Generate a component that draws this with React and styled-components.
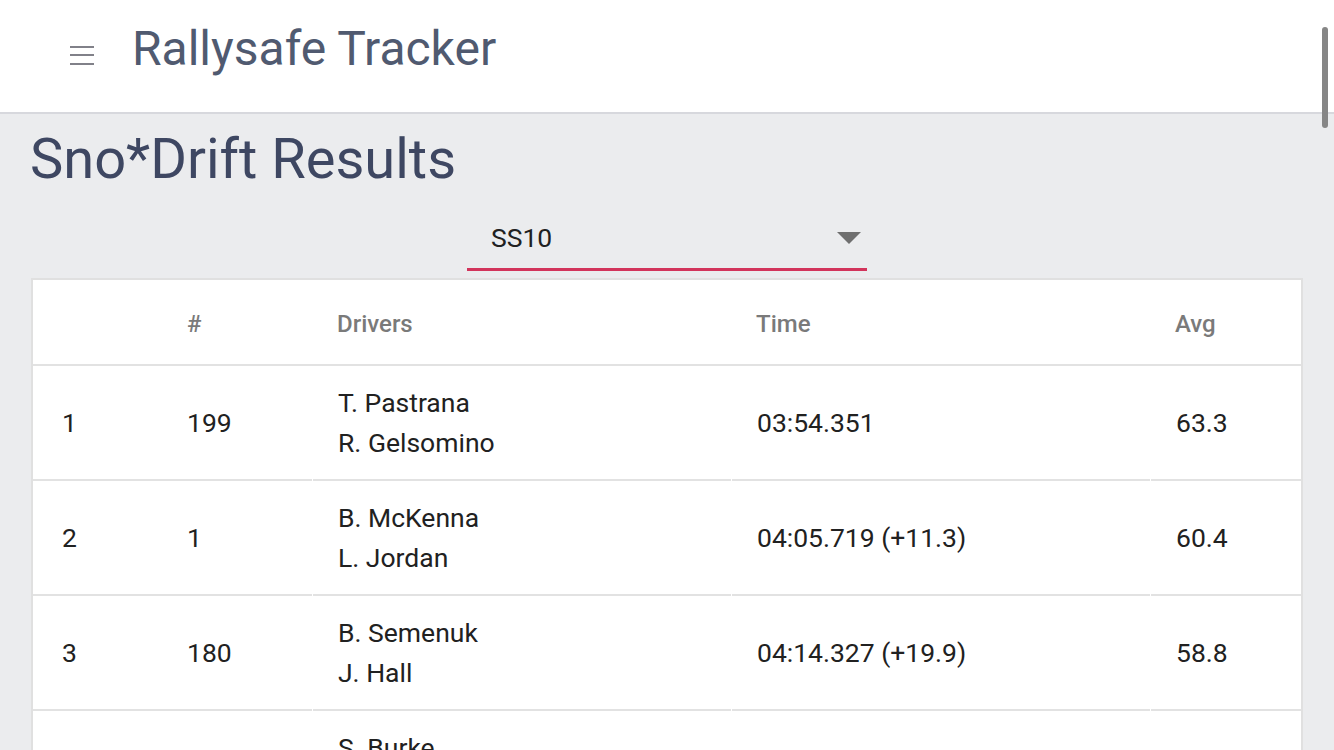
import React from "react";
import styled, { createGlobalStyle } from "styled-components";

const Global = createGlobalStyle`
  html { scrollbar-width: none; }
  html::-webkit-scrollbar { display: none; }
  body {
    margin: 0;
    background: #ebecee;
    font-family: Roboto, "Liberation Sans", sans-serif;
    color: #212121;
  }
  * { box-sizing: border-box; }
`;

const TopBar = styled.header`
  height: 114px;
  background: #ffffff;
  border-bottom: 2px solid #d7d8dd;
  display: flex;
  align-items: center;
  padding-left: 70px;
`;

const MenuButton = styled.div`
  width: 24px;
  height: 19px;
  display: flex;
  flex-direction: column;
  justify-content: space-between;
  margin-top: -2px;
  span {
    display: block;
    height: 2px;
    background: #818189;
  }
`;

const AppTitle = styled.h1`
  margin: 25px 0 0 38px;
  align-self: flex-start;
  font-size: 48px;
  line-height: 48px;
  font-weight: 400;
  color: #505a70;
`;

const Main = styled.main`
  padding: 17px 31px 0 31px;
`;

const PageTitle = styled.h2`
  margin: 0 0 0 -1px;
  font-size: 56px;
  line-height: 56px;
  font-weight: 400;
  color: #3e4762;
`;

const SelectRow = styled.div`
  display: flex;
  justify-content: center;
  margin-top: 35px;
`;

const Select = styled.div`
  width: 400px;
  height: 49px;
  border-bottom: 3px solid #d2345b;
  display: flex;
  align-items: flex-start;
  justify-content: space-between;
  padding: 2px 6px 0 24px;
  font-size: 26.5px;
  line-height: 28px;
  color: #212121;
`;

const Arrow = styled.svg`
  margin-top: 8px;
`;

const Card = styled.section`
  margin-top: 7px;
  background: #ffffff;
  border: 2px solid #e0e0e0;
  border-bottom: none;
`;

const Row = styled.div`
  display: grid;
  grid-template-columns: 129px 150px 419px 419px 151px;
  min-height: ${(p) => (p.$head ? "86px" : "115px")};
`;

const Cell = styled.div`
  display: flex;
  flex-direction: column;
  justify-content: center;
  border-bottom: 2px solid #e2e2e2;
  margin-left: ${(p) => (p.$sep ? "1px" : "0")};
  padding-left: ${(p) => (p.$first ? "29px" : "25px")};
  padding-top: ${(p) => (p.$head ? "4px" : "0")};
  font-size: ${(p) => (p.$head ? "24px" : "26.5px")};
  font-weight: ${(p) => (p.$head ? 500 : 400)};
  color: ${(p) => (p.$head ? "#7a7a7a" : "#212121")};
  line-height: 40px;
`;

const Line = styled.div`
  line-height: 40px;
  white-space: nowrap;
`;

const ScrollThumb = styled.div`
  position: fixed;
  top: 27px;
  right: 6px;
  width: 6px;
  height: 101px;
  border-radius: 3px;
  background: #868686;
`;

const results = [
  { pos: 1, num: 199, drivers: ["T. Pastrana", "R. Gelsomino"], time: "03:54.351", avg: "63.3" },
  { pos: 2, num: 1, drivers: ["B. McKenna", "L. Jordan"], time: "04:05.719 (+11.3)", avg: "60.4" },
  { pos: 3, num: 180, drivers: ["B. Semenuk", "J. Hall"], time: "04:14.327 (+19.9)", avg: "58.8" },
  { pos: 4, num: 42, drivers: ["S. Burke", "K. Quirk"], time: "04:21.083 (+26.7)", avg: "57.2" },
];

export default function App() {
  return (
    <>
      <Global />
      <TopBar>
        <MenuButton>
          <span />
          <span />
          <span />
        </MenuButton>
        <AppTitle>Rallysafe Tracker</AppTitle>
      </TopBar>
      <Main>
        <PageTitle>Sno*Drift Results</PageTitle>
        <SelectRow>
          <Select>
            <span>SS10</span>
            <Arrow width="24" height="12" viewBox="0 0 24 12">
              <path d="M0 0 L24 0 L12 12 Z" fill="#6f6f6f" />
            </Arrow>
          </Select>
        </SelectRow>
        <Card>
          <Row $head>
            <Cell $head $first />
            <Cell $head>#</Cell>
            <Cell $head>Drivers</Cell>
            <Cell $head>Time</Cell>
            <Cell $head>Avg</Cell>
          </Row>
          {results.map((r) => (
            <Row key={r.pos}>
              <Cell $first>{r.pos}</Cell>
              <Cell>{r.num}</Cell>
              <Cell $sep>
                {r.drivers.map((d) => (
                  <Line key={d}>{d}</Line>
                ))}
              </Cell>
              <Cell $sep>{r.time}</Cell>
              <Cell $sep>{r.avg}</Cell>
            </Row>
          ))}
        </Card>
      </Main>
      <ScrollThumb />
    </>
  );
}
